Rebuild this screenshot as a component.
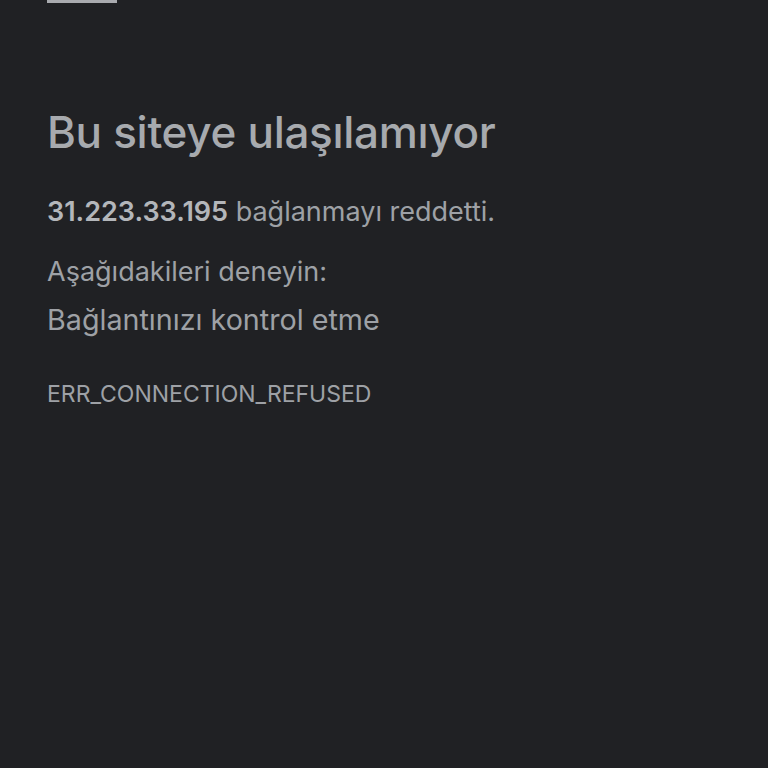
export default function App() {
  return (
    <div className="min-h-[768px] w-[768px] bg-[#202124] font-['Inter','Noto_Sans',sans-serif] text-[#9ea1a6]">
      <div className="ml-[47px] h-[3px] w-[70px] bg-[#a9abaf]" />
      <div className="px-[47px] pt-[101px]">
        <h1 className="text-[44px] leading-[56px] font-medium tracking-[-0.3px] text-[#a7aaae]">Bu siteye ulaşılamıyor</h1>
        <p className="mt-[34px] text-[27px] leading-[36px]">
          <span className="font-semibold text-[#b3b6ba]">31.223.33.195</span> bağlanmayı reddetti.
        </p>
        <p className="mt-[24px] text-[27px] leading-[36px]">Aşağıdakileri deneyin:</p>
        <p className="mt-[11px] text-[28.7px] leading-[38px]">Bağlantınızı kontrol etme</p>
        <p className="mt-[40px] text-[23px] leading-[30px]">ERR_CONNECTION_REFUSED</p>
      </div>
    </div>
  );
}
